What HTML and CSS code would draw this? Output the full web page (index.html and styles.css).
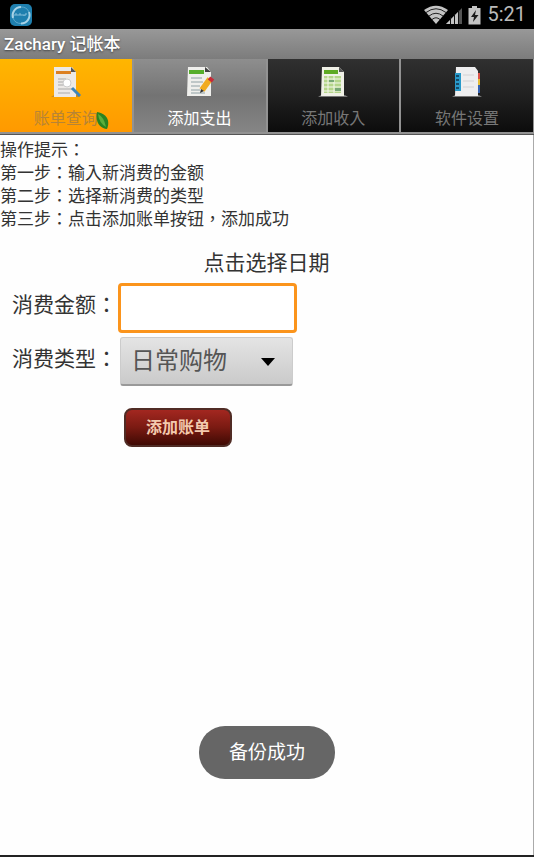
FILE: index.html
```html
<!DOCTYPE html>
<html lang="zh-TW">

<head>
    <meta charset="UTF-8">
    <meta name="viewport" content="width=device-width, initial-scale=1.0">
    <title>Zachary 记帐本</title>
    <link rel="stylesheet" href="styles.css">
</head>

<body>
    <div class="status-bar">
        <svg class="app-icon" width="22" height="22" viewBox="0 0 22 22">
            <rect width="22" height="22" rx="5" fill="#1f7fae" />
            <path d="M3 14A8.500 8.500 0 0 1 11 3M19 8A8.500 8.500 0 0 1 11 19.500" fill="none" stroke="#a9d3e6" stroke-width="2" />
            <path d="M11 3A8.500 8.500 0 0 1 19 8M3 14A8.500 8.500 0 0 0 11 19.500" fill="none" stroke="#5ea9cc" stroke-width="1" />
            <path d="M5 12v-2h2v2M9 12v-2h2v2M12 11h2v1M15 12v-2h2" fill="none" stroke="#86bfda" stroke-width="1" />
        </svg>
        <div class="status-icons">
            <svg width="38" height="20" viewBox="0 0 38 20">
                <path d="M12 19L0 5Q12 -3.500 24 5Z" fill="#c4c4c4" />
                <path d="M2 7.500Q12 0 22 7.500M5 11Q12 5.500 19 11M8 14.500Q12 11 16 14.500" fill="none" stroke="#222" stroke-width="1" />
                <path d="M22 19L38 3V19Z" fill="#555" />
                <path d="M22 19L34 7V19Z" fill="#c4c4c4" />
                <path d="M26.500 12v7M30.500 9v10M34.500 5v14" stroke="#111" stroke-width="1" />
            </svg>
            <svg width="13" height="20" viewBox="0 0 13 20">
                <path d="M4 1h5v2h3.500v16.500H.500V3H4z" fill="#c4c4c4" />
                <path d="M8 5L3 12h3l-1 5 5.500-7H7z" fill="#1a1a1a" />
            </svg>
            <span class="clock">5:21</span>
        </div>
    </div>

    <h1 class="title-bar">Zachary 记帐本</h1>

    <nav class="tabs">
        <button type="button" class="tab tab-pressed">
            <svg width="34" height="34" viewBox="0 0 34 34">
                <path d="M2 32l3-2h24l2 2z" fill="#c98a20" />
                <path d="M5 2h18l4 5v25H5z" fill="#ece9e6" />
                <path d="M22 2l5 5h-5z" fill="#555" />
                <path d="M7 6h15v3H7z" fill="#dc8022" />
                <path d="M9 14h8M9 17h5M9 20h13M9 24h15M9 28h12" stroke="#aaa" />
                <circle cx="18" cy="18" r="4" fill="#fff" stroke="#ccc" />
                <path d="M23 23l8 8" stroke="#3d86bc" stroke-width="3" />
            </svg>
            <span>账单查询</span>
            <svg class="leaf" width="14" height="18" viewBox="0 0 14 18">
                <path d="M1 0C9 1 15 7 11 17C5 16-1 12 1 0Z" fill="#298322" />
                <path d="M2 2Q8 5 10 15Q3 11 2 2Z" fill="#5baf3b" />
            </svg>
        </button>
        <button type="button" class="tab tab-selected">
            <svg width="34" height="34" viewBox="0 0 34 34">
                <path d="M5 2h19l4 5v24H4z" fill="#efefec" />
                <path d="M22 2l6 5h-6z" fill="#444" />
                <path d="M6 5h15v4H6z" fill="#56ae2b" />
                <path d="M8 13h11M8 17h12M8 21h9M8 25h9M8 28h14" stroke="#8fa0a4" />
                <path d="M27 14l-8 11" stroke="#f1ab20" stroke-width="6" />
                <path d="M26 13l4 3" stroke="#c72b38" stroke-width="4" />
                <path d="M18 24l-1 4 4-2z" fill="#333" />
            </svg>
            <span>添加支出</span>
        </button>
        <button type="button" class="tab">
            <svg width="34" height="34" viewBox="0 0 34 34">
                <path d="M2 32l3-2h24l3 2z" fill="#777" />
                <path d="M6 2h17l5 5v24H5z" fill="#f0f1e7" />
                <path d="M23 2l5 5h-5z" fill="#555" />
                <path d="M8 5h14v4H8z" fill="#5eaa24" />
                <path d="M8 11h17v17H8z" fill="#b5d68a" />
                <path d="M8 14h17M8 18h17M8 22h17M8 26h17M12 11v17M18 11v17" stroke="#f6f8ee" />
                <path d="M13 15h5v2h-5zM19 23h6v3h-6z" fill="#79a876" />
            </svg>
            <span>添加收入</span>
        </button>
        <button type="button" class="tab">
            <svg width="34" height="34" viewBox="0 0 34 34">
                <path d="M2 32l3-2h24l3 2z" fill="#777" />
                <path d="M27 8h3v7h-3z" fill="#dc5147" />
                <path d="M27 14h3v7h-3z" fill="#e5bd36" />
                <path d="M27 20h3v8h-3z" fill="#3461b0" />
                <path d="M6 2h19l3 4v25H5z" fill="#eeeeef" />
                <path d="M5 8h6v18H5z" fill="#299aca" />
                <path d="M6 11h3M6 15h3M6 19h3M6 23h3" stroke="#164c6b" stroke-width="2" />
                <path d="M13 10h11M13 16h11M13 22h11" stroke="#d2d2d4" />
            </svg>
            <span>软件设置</span>
        </button>
    </nav>

    <main class="content">
        <div class="hint">
            <p>操作提示：</p>
            <p>第一步：输入新消费的金额</p>
            <p>第二步：选择新消费的类型</p>
            <p>第三步：点击添加账单按钮，添加成功</p>
        </div>

        <form class="bill-form">
            <button type="button" class="date-button">点击选择日期</button>
            <div class="form-row">
                <label for="amount">消费金额：</label>
                <input type="text" id="amount" name="amount">
            </div>
            <div class="form-row">
                <label for="type">消费类型：</label>
                <div class="spinner">
                    <select id="type" name="type">
                        <option>日常购物</option>
                    </select>
                    <svg class="arrow" width="14" height="8" viewBox="0 0 14 8">
                        <path d="M0 0h14L7 8z" fill="#000" />
                    </svg>
                </div>
            </div>
            <button type="submit" class="submit-button">添加账单</button>
        </form>
    </main>

    <div class="toast" role="status">备份成功</div>
</body>

</html>
```
FILE: styles.css
```css
* {
    box-sizing: border-box;
}

body {
    display: flex;
    flex-direction: column;
    min-height: 100vh;
    margin: 0;
    border-bottom: 2px solid #222;
    background-color: #fefefe;
    color: #333;
    font-family: Roboto, "Noto Sans CJK TC", sans-serif;
}

button,
input,
select {
    font-family: inherit;
}

svg {
    display: block;
}

/* 状态栏 */
.status-bar {
    display: flex;
    justify-content: space-between;
    align-items: center;
    height: 29px;
    padding: 0 8px 0 10px;
    background-color: #000;
}

.status-icons {
    display: flex;
    align-items: center;
    gap: 6px;
}

.clock {
    color: #bbb;
    font-size: 20px;
    line-height: 29px;
}

.title-bar {
    height: 30px;
    margin: 0;
    padding: 0 4px;
    background: linear-gradient(#989898, #7c7c7c);
    color: #fff;
    font-size: 17px;
    font-weight: 500;
    line-height: 30px;
    text-shadow: 0 1px 2px #444;
}

/* 标签栏 */
.tabs {
    display: grid;
    grid-template-columns: repeat(4, 1fr);
    gap: 2px;
    padding: 0 1px 2px 0;
    background-color: #929292;
    border-bottom: 1px solid #555;
}

.tab {
    position: relative;
    display: flex;
    flex-direction: column;
    align-items: center;
    gap: 8px;
    height: 73px;
    padding: 6px 0 0;
    border: none;
    background: linear-gradient(#303030, #202020 50%, #0c0c0c);
    color: #777;
    font-size: 16px;
    line-height: 24px;
}

.tab-pressed {
    background: linear-gradient(#ffb600, #ff9900);
    color: #b78435;
}

.tab-selected {
    background: linear-gradient(#8e8e8e, #737373 50%, #858585);
    color: #fff;
}

.leaf {
    position: absolute;
    right: 22px;
    bottom: 2px;
}

/* 内容 */
.content {
    flex: 1;
    padding-top: 4px;
    border-right: 1px solid #aaa;
}

.hint {
    font-size: 17px;
    line-height: 23px;
}

.hint p {
    margin: 0;
}

.bill-form {
    display: flex;
    flex-direction: column;
    padding: 16px 12px 0;
}

.date-button {
    align-self: center;
    margin-bottom: 4px;
    padding: 0;
    border: none;
    background: none;
    color: #333;
    font-size: 21px;
    line-height: 32px;
}

.form-row {
    display: flex;
    margin-bottom: 4px;
}

.form-row label {
    width: 106px;
    font-size: 21px;
    line-height: 44px;
}

#amount {
    width: 179px;
    height: 50px;
    padding: 0 8px;
    border: 3px solid #fb941c;
    border-radius: 4px;
    outline: none;
    background-color: #fff;
    font-size: 21px;
}

.spinner {
    position: relative;
    width: 173px;
    margin-left: 2px;
}

#type {
    appearance: none;
    display: block;
    width: 100%;
    height: 49px;
    padding: 0 40px 0 10px;
    border: 1px solid #ccc;
    border-bottom: 2px solid #999;
    border-radius: 3px;
    background: linear-gradient(#e4e4e4, #cacaca);
    color: #555;
    font-size: 24px;
}

.arrow {
    position: absolute;
    right: 18px;
    top: 21px;
    pointer-events: none;
}

.submit-button {
    width: 108px;
    height: 39px;
    margin: 18px 0 0 112px;
    padding: 0 0 4px;
    border: 2px solid #502c25;
    border-radius: 8px;
    background: linear-gradient(#a32720, #7a1a12 50%, #3f0a04);
    color: #f3c9ae;
    font-size: 16px;
    font-weight: 700;
}

/* 提示框 */
.toast {
    position: fixed;
    left: 50%;
    bottom: 78px;
    transform: translateX(-50%);
    padding: 0 30px;
    border-radius: 26px;
    background-color: #666;
    color: #fff;
    font-size: 19px;
    line-height: 53px;
}
```
